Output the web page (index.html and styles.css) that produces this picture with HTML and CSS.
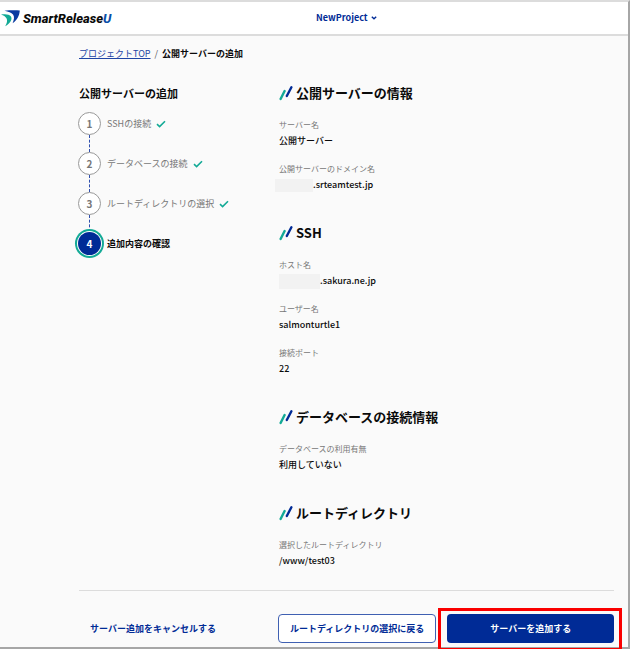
FILE: index.html
```html
<!DOCTYPE html>
<html lang="ja">
<head>
    <meta charset="UTF-8">
    <meta name="viewport" content="width=device-width, initial-scale=1.0">
    <title>公開サーバーの追加 | SmartReleaseU</title>
    <link rel="stylesheet" href="styles.css">
</head>
<body>

    <!-- Shared icons -->
    <svg class="sprite" aria-hidden="true">
        <symbol id="icon-check" viewBox="0 0 10 8">
            <path d="M1 4.2 3.6 6.6 9 1.2" fill="none" stroke="#13aa96" stroke-width="1.6"/>
        </symbol>
        <symbol id="icon-slash" viewBox="0 0 14 16">
            <path d="M1.6 14 5.600 6" stroke="#13aa96" stroke-width="2.4" stroke-linecap="round"/>
            <path d="M7.8 11 12.400 2.2" stroke="#002b96" stroke-width="2.4" stroke-linecap="round"/>
        </symbol>
    </svg>

    <div class="window">
        <header class="header">
            <a class="logo" href="#">
                <svg class="logo-mark" viewBox="0 -1 20 18" aria-hidden="true">
                    <path d="M4.5.8C9 .2 15 .2 19.8.4 19.4 5.500 17.500 9.500 12.600 13.200 14.200 9.500 14.600 6.800 13 4.600 11.400 2.600 8.500 1.600 4.500.8Z" fill="#0a3aa0"/>
                    <path d="M1 4.6C5 3.800 9.400 4.200 11 6.400 12.600 9.600 10 13.400 5.200 16.200 7 13.200 7.600 10.600 6.600 8.600 5.600 6.600 3.500 5.400 1 4.600Z" fill="#13aa96"/>
                </svg>
                <span class="logo-text">SmartRelease<span class="logo-u">U</span></span>
            </a>
            <button class="project-menu" type="button">
                NewProject
                <svg class="chevron" viewBox="0 0 6 4" aria-hidden="true"><path d="M.8.8 3 2.800 5.200.8" fill="none" stroke="#002b96" stroke-width="1.4"/></svg>
            </button>
        </header>

        <main class="page">
            <nav class="breadcrumb">
                <a href="#">プロジェクトTOP</a>
                <span class="separator">/</span>
                <span class="current">公開サーバーの追加</span>
            </nav>

            <div class="columns">
                <aside>
                    <h1 class="steps-title">公開サーバーの追加</h1>
                    <ol class="steps">
                        <li class="step"><span class="number">1</span>SSHの接続<svg class="check"><use href="#icon-check"/></svg></li>
                        <li class="step"><span class="number">2</span>データベースの接続<svg class="check"><use href="#icon-check"/></svg></li>
                        <li class="step"><span class="number">3</span>ルートディレクトリの選択<svg class="check"><use href="#icon-check"/></svg></li>
                        <li class="step active"><span class="number">4</span>追加内容の確認</li>
                    </ol>
                </aside>

                <div class="sections">
                    <section>
                        <h2><svg class="slash"><use href="#icon-slash"/></svg>公開サーバーの情報</h2>
                        <dl>
                            <div class="item"><dt>サーバー名</dt><dd>公開サーバー</dd></div>
                            <div class="item"><dt>公開サーバーのドメイン名</dt><dd><span class="mask mask-domain"></span>.srteamtest.jp</dd></div>
                        </dl>
                    </section>
                    <section>
                        <h2><svg class="slash"><use href="#icon-slash"/></svg>SSH</h2>
                        <dl>
                            <div class="item"><dt>ホスト名</dt><dd><span class="mask mask-host"></span>.sakura.ne.jp</dd></div>
                            <div class="item"><dt>ユーザー名</dt><dd>salmonturtle1</dd></div>
                            <div class="item"><dt>接続ポート</dt><dd>22</dd></div>
                        </dl>
                    </section>
                    <section>
                        <h2><svg class="slash"><use href="#icon-slash"/></svg>データベースの接続情報</h2>
                        <dl>
                            <div class="item"><dt>データベースの利用有無</dt><dd>利用していない</dd></div>
                        </dl>
                    </section>
                    <section>
                        <h2><svg class="slash"><use href="#icon-slash"/></svg>ルートディレクトリ</h2>
                        <dl>
                            <div class="item"><dt>選択したルートディレクトリ</dt><dd>/www/test03</dd></div>
                        </dl>
                    </section>
                </div>
            </div>

            <div class="actions">
                <div><button class="btn btn-text" type="button">サーバー追加をキャンセルする</button></div>
                <div class="action-group">
                    <button class="btn btn-outline" type="button">ルートディレクトリの選択に戻る</button>
                    <div class="highlight"><button class="btn btn-primary" type="submit">サーバーを追加する</button></div>
                </div>
            </div>
        </main>
    </div>

</body>
</html>
```
FILE: styles.css
```css
* {
    box-sizing: border-box;
}

body {
    margin: 0;
    background: #fff;
    color: #0a0a0a;
    font-family: "Noto Sans CJK JP", sans-serif;
    font-size: 9px;
    line-height: 16px;
}

h1, h2, dl, dd, ol {
    margin: 0;
    padding: 0;
}

button {
    font-family: inherit;
    font-size: 9px;
    font-weight: bold;
    line-height: 16px;
    color: #002b96;
    cursor: pointer;
}

.sprite {
    position: absolute;
    width: 0;
    height: 0;
}

.window {
    background: #fafafa;
    border-top: 2px solid #dcdcdc;
    border-right: 2px solid #a6a6a6;
    border-bottom: 2px solid #a6a6a6;
}

/* Header */
.header {
    display: grid;
    grid-template-columns: 316px 1fr;
    align-items: center;
    height: 34px;
    background: #fff;
    border-bottom: 2px solid #dcdcdc;
}

.logo {
    display: flex;
    align-items: center;
    gap: 3px;
    text-decoration: none;
}

.logo-mark {
    width: 20px;
    height: 18px;
}

.logo-text {
    padding-top: 1px;
    color: #0a0a0a;
    font-family: Roboto, sans-serif;
    font-size: 13px;
    font-style: italic;
    font-weight: 800;
}

.logo-u {
    color: #0a4fa8;
}

.project-menu {
    justify-self: start;
    display: flex;
    align-items: center;
    gap: 3px;
    padding: 0;
    border: none;
    background: none;
}

.chevron {
    width: 6px;
    height: 4px;
    margin-left: 0;
}

/* Page */
.page {
    padding: 10px 14px 4px 79px;
}

.breadcrumb {
    display: flex;
    gap: 4px;
}

.breadcrumb a {
    color: #1f45a5;
    text-decoration: underline;
}

.separator {
    color: #555;
}

.current {
    font-weight: bold;
}

.columns,
.actions {
    display: grid;
    grid-template-columns: 200px 1fr;
}

.columns {
    margin-top: 21px;
    padding-bottom: 21px;
    border-bottom: 1px solid #dcdcdc;
}

/* Steps */
.steps-title {
    font-size: 11px;
    line-height: 20px;
}

.steps {
    display: grid;
    gap: 17px;
    margin-top: 9px;
    list-style: none;
}

.step {
    position: relative;
    display: flex;
    align-items: center;
    color: #777;
}

.number {
    display: flex;
    align-items: center;
    justify-content: center;
    width: 23px;
    height: 23px;
    margin-right: 6px;
    margin-left: -1px;
    border: 1px solid #999;
    border-radius: 50%;
    background: #fff;
    font-size: 10px;
    font-weight: bold;
}

/* Dashed line down to the next step */
.step:not(:last-child)::after {
    content: "";
    position: absolute;
    top: 23px;
    left: 10px;
    height: 17px;
    border-left: 1px dashed #2f4fae;
}

.step.active {
    color: #0a0a0a;
    font-weight: bold;
}

.active .number {
    z-index: 1;
    border: none;
    background: #002b96;
    box-shadow: 0 0 0 1px #fff, 0 0 0 3px #13aa96;
    color: #fff;
}

.check {
    width: 10px;
    height: 8px;
    margin-left: 5px;
}

/* Sections */
.sections {
    display: grid;
    gap: 30px;
}

h2 {
    display: flex;
    align-items: center;
    gap: 3px;
    font-size: 13px;
    line-height: 20px;
}

.slash {
    width: 14px;
    height: 16px;
}

dl {
    display: grid;
    gap: 12px;
    margin-top: 14px;
}

dt {
    color: #777;
    font-size: 8px;
}

dd {
    display: flex;
    align-items: center;
    height: 16px;
    font-weight: 500;
}

.mask {
    background: #f2f2f2;
}

.mask-domain {
    width: 38px;
    height: 13px;
    margin-left: -4px;
}

.mask-host {
    width: 41px;
    height: 15px;
}

/* Actions */
.actions {
    margin-top: 23px;
}

.action-group {
    display: flex;
    gap: 11px;
    margin-left: -1px;
}

.btn {
    height: 29px;
    padding: 0 11px;
    border: 1px solid transparent;
    border-radius: 4px;
    white-space: nowrap;
}

.btn-text {
    padding: 0 10px;
    background: none;
}

.btn-outline {
    border-color: #3f60b2;
    background: #fff;
}

.btn-primary {
    width: 100%;
    background: #002b96;
    color: #fff;
}

.highlight {
    position: relative;
    flex: 1;
}

.highlight::after {
    content: "";
    position: absolute;
    inset: -6px -8px -8px -9px;
    border: 3px solid #fa0000;
    pointer-events: none;
}
```
